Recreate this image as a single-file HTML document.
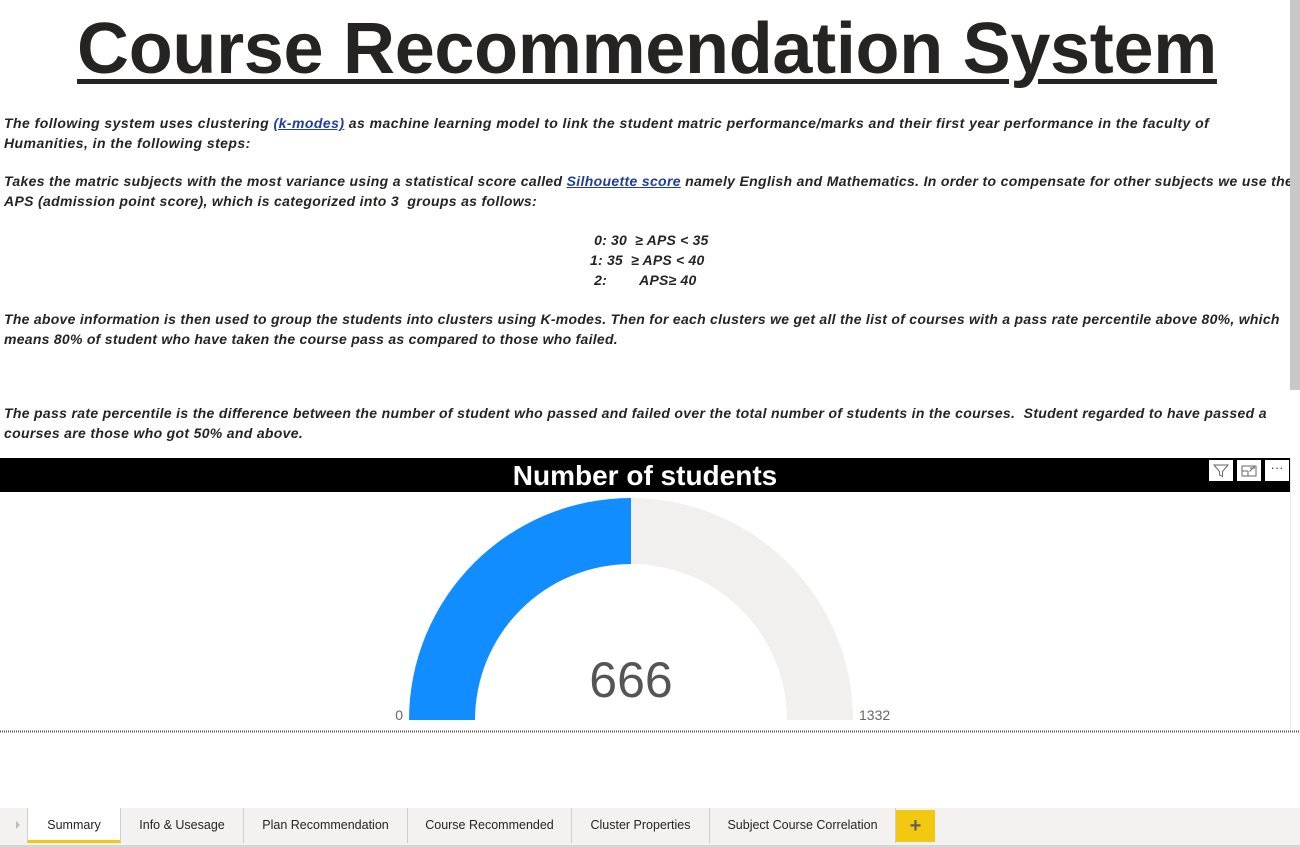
<!DOCTYPE html>
<html><head><style>
*{margin:0;padding:0;box-sizing:border-box}
body{width:1300px;height:847px;overflow:hidden;background:#fff;position:relative;font-family:"Liberation Sans",sans-serif;color:#252423}
.t{position:absolute;left:77px;top:8px;width:1140px;text-align:center;font-size:72px;font-weight:bold;text-decoration:underline;text-decoration-thickness:5px;text-underline-offset:6px;color:#252423;letter-spacing:-0.3px;white-space:nowrap}
.p{position:absolute;left:4px;font-size:14px;font-weight:bold;font-style:italic;line-height:20px;white-space:nowrap;color:#252423;letter-spacing:0.45px}
a{color:#1f3d99;text-decoration:underline}
.tab{position:absolute;top:808px;height:35px;font-size:12.5px;color:#252423;text-align:center;line-height:35px;border-right:1px solid #d0cfce}
</style></head><body>
<div class="t">Course Recommendation System</div>
<div class="p" style="top:113px">The following system uses clustering <a>(k-modes)</a> as machine learning model to link the student matric performance/marks and their first year performance in the faculty of<br>Humanities, in the following steps:</div>
<div class="p" style="top:171px;letter-spacing:0.33px">Takes the matric subjects with the most variance using a statistical score called <a>Silhouette score</a> namely English and Mathematics. In order to compensate for other subjects we use the<br>APS (admission point score), which is categorized into 3&nbsp; groups as follows:</div>
<div class="p" style="top:230px;left:590px;letter-spacing:0.2px">&nbsp;0: 30&nbsp; ≥ APS &lt; 35<br>1: 35&nbsp; ≥ APS &lt; 40<br>&nbsp;2:&nbsp;&nbsp;&nbsp;&nbsp;&nbsp;&nbsp;&nbsp; APS≥ 40</div>
<div class="p" style="top:309px;letter-spacing:0.27px">The above information is then used to group the students into clusters using K-modes. Then for each clusters we get all the list of courses with a pass rate percentile above 80%, which<br>means 80% of student who have taken the course pass as compared to those who failed.</div>
<div class="p" style="top:403px;letter-spacing:0.32px">The pass rate percentile is the difference between the number of student who passed and failed over the total number of students in the courses.&nbsp; Student regarded to have passed a<br>courses are those who got 50% and above.</div>
<div style="position:absolute;right:0;top:0;width:10px;height:390px;background:#c8c8c8"></div>
<div style="position:absolute;left:0;top:458px;width:1290px;height:34px;background:#000;color:#fff;font-size:28px;text-align:center;line-height:36px;font-weight:bold">Number of students</div>
<div style="position:absolute;left:1290px;top:458px;width:1px;height:273px;background:#e6e6e6"></div>
<div style="position:absolute;left:1209px;top:460px;width:24px;height:21px;background:#fff"><svg width="24" height="21"><path d="M5 5h14l-5.5 6.5v5l-3-1.5v-3.5z" fill="none" stroke="#666" stroke-width="1"/></svg></div>
<div style="position:absolute;left:1237px;top:460px;width:24px;height:21px;background:#fff"><svg width="24" height="21"><path d="M5 6h14v10h-14z" fill="none" stroke="#666"/><path d="M11 11h-6M11 11v5M13 8h5v-0M17.5 6.5l-5 5" fill="none" stroke="#666"/></svg></div>
<div style="position:absolute;left:1265px;top:460px;width:24px;height:21px;background:#fff;color:#444;font-size:13px;text-align:center;line-height:16px">···</div>
<svg style="position:absolute;left:0;top:0" width="1300" height="847">
<path d="M409 720A222 222 0 0 1 853 720L787 720A156 156 0 0 0 475 720Z" fill="#f1f0ef"/>
<path d="M409 720A222 222 0 0 1 631 498L631 564A156 156 0 0 0 475 720Z" fill="#118dff"/>
<text x="631" y="697" font-size="50" fill="#555" text-anchor="middle" font-family="Liberation Sans">666</text>
<text x="403" y="720" font-size="14" fill="#666" text-anchor="end" font-family="Liberation Sans">0</text>
<text x="859" y="720" font-size="14" fill="#666" font-family="Liberation Sans">1332</text>
<line x1="0" y1="731.5" x2="1300" y2="731.5" stroke="#555" stroke-width="2" stroke-dasharray="1 1"/>
</svg>
<div style="position:absolute;left:0;top:808px;width:1300px;height:39px;background:#f3f2f1;border-bottom:2px solid #d6d5d4"></div>
<div style="position:absolute;left:16px;top:821px;width:0;height:0;border-left:4px solid #bbb;border-top:4px solid transparent;border-bottom:4px solid transparent"></div>
<div class="tab" style="left:27px;width:94px;background:#fff;border-left:1px solid #d0cfce;border-bottom:3px solid #f2c811;line-height:34px">Summary</div>
<div class="tab" style="left:121px;width:123px">Info &amp; Usesage</div>
<div class="tab" style="left:244px;width:164px">Plan Recommendation</div>
<div class="tab" style="left:408px;width:164px">Course Recommended</div>
<div class="tab" style="left:572px;width:138px">Cluster Properties</div>
<div class="tab" style="left:710px;width:186px">Subject Course Correlation</div>
<div style="position:absolute;left:896px;top:810px;width:39px;height:32px;background:#f2c811;color:#605e5c;font-size:20px;font-weight:bold;text-align:center;line-height:32px">+</div>
</body></html>
